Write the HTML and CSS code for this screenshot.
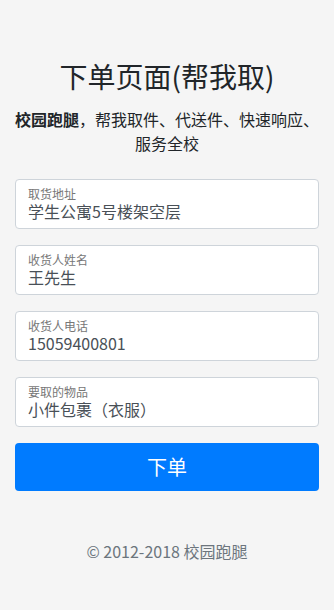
FILE: index.html
```html
<!DOCTYPE html>
<html lang="zh-CN">
<head>
<meta charset="utf-8">
<meta name="viewport" content="width=device-width, initial-scale=1">
<title>下单页面(帮我取)</title>
<link rel="stylesheet" href="styles.css">
</head>
<body>
<form class="form-order">
  <div class="intro">
    <h1 class="title">下单页面(帮我取)</h1>
    <p class="desc"><strong>校园跑腿</strong>，帮我取件、代送件、快速响应、服务全校</p>
  </div>
  <div class="fields">
    <label class="field">
      <span class="field-label">取货地址</span>
      <span class="field-value">学生公寓5号楼架空层</span>
    </label>
    <label class="field">
      <span class="field-label">收货人姓名</span>
      <span class="field-value">王先生</span>
    </label>
    <label class="field">
      <span class="field-label">收货人电话</span>
      <span class="field-value">15059400801</span>
    </label>
    <label class="field">
      <span class="field-label">要取的物品</span>
      <span class="field-value">小件包裹（衣服）</span>
    </label>
    <button class="btn-submit" type="button">下单</button>
  </div>
  <p class="footer">© 2012-2018 校园跑腿</p>
</form>
</body>
</html>
```
FILE: styles.css
```css
html, body {
  margin: 0;
  padding: 0;
}
body {
  background: #f5f5f5;
  font-family: "Noto Sans CJK SC", "Noto Sans", sans-serif;
  color: #212529;
  font-size: 16px;
}
.form-order {
  padding: 59px 15px 0;
}
.intro {
  text-align: center;
  margin-bottom: 24px;
}
.title {
  margin: 0 0 14px;
  font-size: 28px;
  font-weight: 400;
  line-height: 34px;
}
.desc {
  margin: 0 -6px;
  font-size: 16px;
  line-height: 24px;
}
.desc strong {
  font-weight: 700;
}
.fields {
  display: flex;
  flex-direction: column;
  gap: 16px;
}
.field {
  display: flex;
  flex-direction: column;
  box-sizing: border-box;
  height: 50px;
  padding: 6px 12px 0;
  background: #fff;
  border: 1px solid #ced4da;
  border-radius: 4px;
}
.field-label {
  font-size: 12px;
  line-height: 15px;
  color: #777;
}
.field-value {
  font-size: 16px;
  line-height: 20px;
  color: #495057;
}
.btn-submit {
  height: 48px;
  border: 0;
  border-radius: 4px;
  background: #007bff;
  color: #fff;
  font-family: inherit;
  font-size: 20px;
  line-height: 24px;
  padding: 0;
}
.footer {
  margin: 48px 0 0;
  text-align: center;
  color: #6c757d;
  font-size: 16px;
  line-height: 24px;
}
```
